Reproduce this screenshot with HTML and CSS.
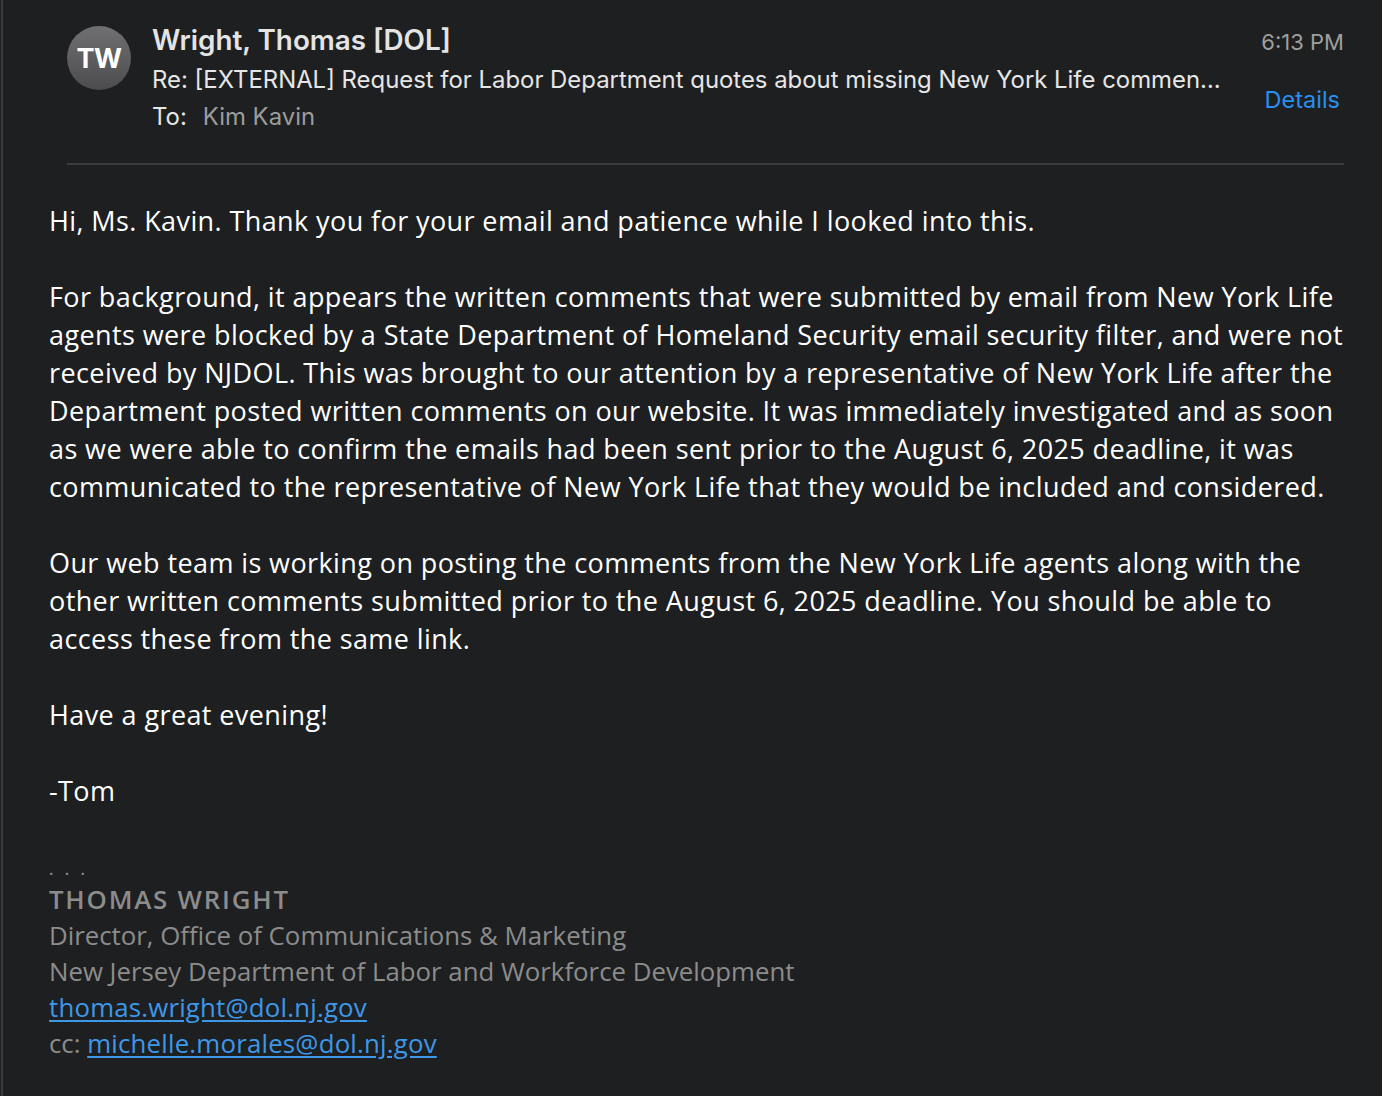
FILE: index.html
```html
<!DOCTYPE html>
<html>
<head>
<meta charset="utf-8">
<link rel="stylesheet" href="styles.css">
</head>
<body>
<div class="frame">
  <header class="head">
    <div class="avatar">TW</div>
    <div class="meta">
      <div class="sender">Wright, Thomas [DOL]</div>
      <div class="subject">Re: [EXTERNAL] Request for Labor Department quotes about missing New York Life commen…</div>
      <div class="to"><span class="to-label">To:</span><span class="to-name">Kim Kavin</span></div>
    </div>
    <div class="side">
      <div class="time">6:13 PM</div>
      <div class="details">Details</div>
    </div>
  </header>
  <div class="rule"></div>
  <main class="body">
    <p>Hi, Ms. Kavin. Thank you for your email and patience while I looked into this.</p>
    <p>For background, it appears the written comments that were submitted by email from New York Life<br>agents were blocked by a State Department of Homeland Security email security filter, and were not<br>received by NJDOL. This was brought to our attention by a representative of New York Life after the<br>Department posted written comments on our website. It was immediately investigated and as soon<br>as we were able to confirm the emails had been sent prior to the August 6, 2025 deadline, it was<br>communicated to the representative of New York Life that they would be included and considered.</p>
    <p>Our web team is working on posting the comments from the New York Life agents along with the<br>other written comments submitted prior to the August 6, 2025 deadline. You should be able to<br>access these from the same link.</p>
    <p>Have a great evening!</p>
    <p>-Tom</p>
  </main>
  <footer class="sig">
    <div class="dots">. . .</div>
    <div class="sig-name">THOMAS WRIGHT</div>
    <div>Director, Office of Communications &amp; Marketing</div>
    <div>New Jersey Department of Labor and Workforce Development</div>
    <div><a class="link" href="#">thomas.wright@dol.nj.gov</a></div>
    <div>cc: <a class="link" href="#">michelle.morales@dol.nj.gov</a></div>
  </footer>
</div>
</body>
</html>
```
FILE: styles.css
```css
html, body {
  margin: 0;
  padding: 0;
  background: #1e1f21;
}
body {
  width: 1382px;
  height: 1096px;
  overflow: hidden;
}
.frame {
  height: 1096px;
  box-sizing: border-box;
  border-left: 2px solid #3a3b3d;
  margin-left: 1px;
  padding-left: 46px;
  padding-right: 38px;
}
.head {
  display: flex;
  align-items: flex-start;
  padding-left: 18px;
  padding-top: 26px;
}
.avatar {
  width: 64px;
  height: 64px;
  border-radius: 50%;
  background: linear-gradient(180deg, #707072 0%, #4c4c4e 100%);
  color: #ffffff;
  font-family: Inter, "Liberation Sans", sans-serif;
  font-weight: 700;
  font-size: 27px;
  display: flex;
  align-items: center;
  justify-content: center;
  letter-spacing: -0.5px;
  margin-right: 21px;
  flex: none;
}
.meta {
  flex: 1;
  font-family: Inter, "Liberation Sans", sans-serif;
  color: #e6e6e6;
}
.sender {
  font-size: 27.8px;
  font-weight: 600;
  line-height: 30px;
  margin-top: -1px;
  color: #e4e4e4;
}
.subject {
  font-size: 23.9px;
  line-height: 28px;
  margin-top: 11px;
  white-space: nowrap;
}
.to {
  font-size: 23.9px;
  line-height: 28px;
  margin-top: 9px;
}
.to-label { margin-right: 16px; }
.to-name { color: #9c9c9c; }
.side {
  text-align: right;
  font-family: Inter, "Liberation Sans", sans-serif;
  flex: none;
}
.time {
  font-size: 22px;
  color: #9f9f9f;
  line-height: 30px;
  margin-top: 1px;
}
.details {
  font-size: 23.5px;
  color: #2a8ff0;
  line-height: 30px;
  margin-top: 28px;
  margin-right: 4px;
}
.rule {
  height: 2px;
  background: #3a3b3d;
  margin-left: 18px;
  margin-top: 32px;
}
.body {
  font-family: "Open Sans", Lato, sans-serif;
  color: #ffffff;
  font-size: 27px;
  font-weight: 500;
  letter-spacing: 0.4px;
  line-height: 38px;
  padding-top: 37px;
  white-space: nowrap;
}
.body p {
  margin: 0 0 38px 0;
}
.sig {
  font-family: "Open Sans", Lato, sans-serif;
  color: #8c8c8c;
  font-size: 25.8px;
  font-weight: 400;
  line-height: 36px;
  margin-top: 48px;
  white-space: nowrap;
}
.dots {
  line-height: 23px;
  height: 23px;
  font-size: 16px;
  font-weight: 600;
  letter-spacing: 3.6px;
  padding-top: 0;
  box-sizing: border-box;
  overflow: hidden;
}
.sig-name {
  font-weight: 600;
  letter-spacing: 1.8px;
}
.link {
  color: #3d98e8;
  text-decoration: underline;
  text-underline-offset: 3px;
  letter-spacing: 0.2px;
}
```
